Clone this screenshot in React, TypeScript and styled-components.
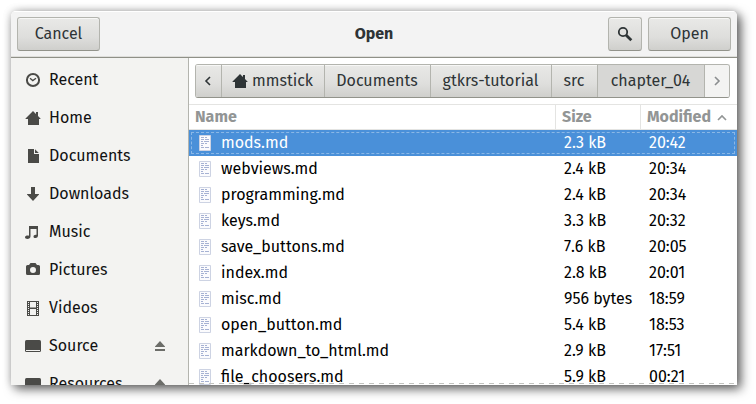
import React from "react";
import styled, { createGlobalStyle, css } from "styled-components";

const GlobalStyle = createGlobalStyle`
  *, *::before, *::after { box-sizing: border-box; }
  body {
    margin: 0;
    background: #fff;
    color: #000;
    font: 16px/20px "Fira Sans", "Noto Sans", "Open Sans", sans-serif;
  }
  button { font: inherit; color: inherit; margin: 0; }
`;

const Desktop = styled.main`
  display: flex;
  height: 100vh;
  padding: 11px 19px 19px 11px;
`;

const Dialog = styled.section`
  flex: 1;
  min-width: 0;
  display: flex;
  flex-direction: column;
  overflow: hidden;
  background: #fff;
  border-radius: 5px 5px 0 0;
  box-shadow: 4px 4px 11px rgba(0, 0, 0, 0.6), 0 0 8px rgba(0, 0, 0, 0.2);
`;

const HeaderBar = styled.header`
  display: grid;
  grid-template-columns: 1fr auto 1fr;
  align-items: center;
  flex: none;
  padding: 6px;
  background: #f3f3f3;
  border-bottom: 1px solid #8f9087;
  box-shadow: inset 0 1px #fff, inset 0 -1px #dededb;
`;

const Title = styled.h1`
  margin: 0;
  font-size: 16px;
  line-height: 20px;
  font-weight: 700;
  color: #2e3436;
`;

const HeaderEnd = styled.div`
  display: flex;
  justify-content: flex-end;
  gap: 6px;
`;

const raised = css`
  background: linear-gradient(#e9e9e7, #dededc 60%, #cfcfcc);
  box-shadow: inset 0 1px #f7f7f6;
`;

const PushButton = styled.button<{ $icon?: boolean }>`
  ${raised}
  display: flex;
  align-items: center;
  justify-content: center;
  width: ${(p) => (p.$icon ? 34 : 83)}px;
  height: 34px;
  padding: 0;
  border: 1px solid #b3b4ae;
  border-bottom-color: #92938b;
  border-radius: 3px;
  color: #2e3436;
`;

const Body = styled.div`
  flex: 1;
  min-height: 0;
  display: grid;
  grid-template-columns: 178px minmax(0, 1fr);
`;

const Sidebar = styled.nav`
  overflow: hidden;
  padding-top: 3px;
  background: #f3f3f1;
  border-right: 1px solid #b3b4ae;
`;

const PlaceList = styled.ul`
  margin: 0;
  padding: 0;
  list-style: none;
`;

const PlaceItem = styled.li`
  display: flex;
  align-items: center;
  height: 38px;
  padding: 0 20px 0 14px;
`;

const PlaceLink = styled.a`
  flex: 1;
  display: flex;
  align-items: center;
  gap: 8px;
  color: #111;
  text-decoration: none;
`;

const EjectButton = styled.button`
  display: flex;
  padding: 0;
  border: 0;
  background: none;
  color: #6c6d69;
`;

const Glyph = styled.svg`
  flex: none;
  display: block;
  width: 16px;
  height: 16px;
  fill: currentColor;
`;

const PlaceGlyph = styled(Glyph)`
  color: #4a4a47;
`;

const Files = styled.div`
  position: relative;
  overflow: hidden;

  &::after {
    content: "";
    position: absolute;
    left: 0;
    right: 0;
    bottom: 1px;
    height: 1px;
    background: repeating-linear-gradient(90deg, #c3c4c0 0 5px, transparent 5px 10px);
  }
`;

const PathBar = styled.div`
  display: flex;
  height: 34px;
  margin: 6px 7px 6px 6px;
  border: 1px solid #b3b4ae;
  border-bottom-color: #92938b;
  border-radius: 3px;
  overflow: hidden;
`;

const PathButton = styled.button<{ $basis: number; $current?: boolean }>`
  ${raised}
  flex: 1 1 ${(p) => p.$basis}px;
  min-width: 0;
  display: flex;
  align-items: center;
  justify-content: center;
  gap: 4px;
  padding: 0 1px 0 0;
  border: 0;
  border-right: 1px solid #b3b4ae;
  color: #2e3436;
  white-space: nowrap;
  ${(p) => p.$current && css`
    background: #d7d7d5;
    box-shadow: none;
  `}
  &:last-child { border-right: 0; }
  &:disabled {
    background: #f3f3f2;
    box-shadow: none;
    color: #8b8e8f;
  }
`;

const FileTable = styled.table`
  width: 100%;
  table-layout: fixed;
  border-spacing: 0;
`;

const Column = styled.th<{ $width?: number }>`
  width: ${(p) => (p.$width ? `${p.$width}px` : "auto")};
  height: 26px;
  padding: 0 0 0 6px;
  border-top: 1px solid #e4e4e2;
  border-bottom: 1px solid #e4e4e2;
  text-align: left;
  & + & { border-left: 1px solid #e4e4e2; }
`;

const SortButton = styled.button`
  display: flex;
  align-items: center;
  gap: 3px;
  padding: 0;
  border: 0;
  background: none;
  color: #929595;
  font-weight: 700;
`;

const FileRow = styled.tr<{ $selected?: boolean }>`
  height: 26px;
  ${(p) => p.$selected && css`
    background: #4a90d9;
    color: #fff;
    outline: 1px dashed #8ab7e6;
    outline-offset: -3px;
  `}
`;

const Cell = styled.td`
  padding: 0 0 0 9px;
  white-space: nowrap;
`;

const FileName = styled.div`
  display: flex;
  align-items: center;
  gap: 10px;
  padding-left: 1px;
`;

const PageGlyph = styled.svg`
  display: block;
  width: 12px;
  height: 16px;
`;

type PlaceIcon = "recent" | "home" | "documents" | "downloads" | "music" | "pictures" | "videos" | "drive";

const HOME = "M8 1 0.5 8.5V9H3v6h11V9h1.5V8.5L13 6V2h-2v2Z";

const placeShapes: Record<PlaceIcon, React.ReactNode> = {
  recent: (
    <g fill="none" stroke="currentColor">
      <circle cx="8" cy="8" r="6.1" strokeWidth="2" />
      <path d="M5 6.2 7.8 8.6 11 6.2" strokeWidth="1.3" />
    </g>
  ),
  home: <path d={HOME} />,
  documents: (
    <>
      <path d="M3 1h6v5h5v9H3z" />
      <path d="M10 1.2 13.8 5H10z" />
    </>
  ),
  downloads: <path d="M6 1h4v7h4v.6L8 15 2 8.6V8h4z" />,
  music: (
    <path d="M4 2h9v9.5C13 13.2 11.8 14 10.5 14S8.500 13.3 8.500 12.4C8.500 11.3 9.8 10.500 11.5 10.8V5H5.500v7.3C5.500 14 4 15 2.500 15S0 14.3 0 13.3C0 12 1.8 11.3 4 11.7z" />
  ),
  pictures: (
    <path
      fillRule="evenodd"
      d="M5.500 1h5l1.500 2h1.500Q15 3 15 4.500v7Q15 13 13.500 13h-11Q1 13 1 11.500v-7Q1 3 2.500 3H4zM8 5a3 3 0 1 0 0 6 3 3 0 0 0 0-6z"
    />
  ),
  videos: (
    <path
      fillRule="evenodd"
      d="M2 1h12v15H2zM5 2v5.500h6V2zM5 9v6h6V9zM3 2v1h1V2zM3 4v1h1V4zM3 6v1h1V6zM3 8v1h1V8zM3 10v1h1v-1zM3 12v1h1v-1zM3 14v1h1v-1zM12 2v1h1V2zM12 4v1h1V4zM12 6v1h1V6zM12 8v1h1V8zM12 10v1h1v-1zM12 12v1h1v-1zM12 14v1h1v-1z"
    />
  ),
  drive: (
    <>
      <path d="M1.500 2h13Q16 2 16 3.500V12.500Q16 14 14.500 14h-13Q0 14 0 12.500V3.500Q0 2 1.500 2z" />
      <path d="M1 12h14v1H1z" fill="#f3f3f1" />
    </>
  ),
};

interface Place {
  label: string;
  icon: PlaceIcon;
  removable?: boolean;
}

const places: Place[] = [
  { label: "Recent", icon: "recent" },
  { label: "Home", icon: "home" },
  { label: "Documents", icon: "documents" },
  { label: "Downloads", icon: "downloads" },
  { label: "Music", icon: "music" },
  { label: "Pictures", icon: "pictures" },
  { label: "Videos", icon: "videos" },
  { label: "Source", icon: "drive", removable: true },
  { label: "Resources", icon: "drive", removable: true },
];

const files = [
  ["mods.md", "2.3 kB", "20:42"],
  ["webviews.md", "2.4 kB", "20:34"],
  ["programming.md", "2.4 kB", "20:34"],
  ["keys.md", "3.3 kB", "20:32"],
  ["save_buttons.md", "7.6 kB", "20:05"],
  ["index.md", "2.8 kB", "20:01"],
  ["misc.md", "956 bytes", "18:59"],
  ["open_button.md", "5.4 kB", "18:53"],
  ["markdown_to_html.md", "2.9 kB", "17:51"],
  ["file_choosers.md", "5.9 kB", "00:21"],
];

const Chevron = ({ d }: { d: string }) => (
  <Glyph viewBox="0 0 16 16" aria-hidden="true">
    <path d={d} fill="none" stroke="currentColor" strokeWidth="1.6" />
  </Glyph>
);

const TextFileIcon = () => (
  <PageGlyph viewBox="0 0 12 16" aria-hidden="true">
    <path d="M.5.5h11v15H.5z" fill="#fbfbfd" stroke="#cdd3e3" />
    <path
      d="M2 2.500h3M6 2.500h2M2 4.500h3M6 4.500h4M2 6.500h2M5 6.500h5M2 8.500h3M6 8.500h2M2 10.500h2M2 12.500h3M6 12.500h4"
      stroke="#a6b2d3"
    />
  </PageGlyph>
);

export default function App() {
  return (
    <Desktop>
      <GlobalStyle />
      <Dialog role="dialog" aria-labelledby="dialog-title">
        <HeaderBar>
          <PushButton type="button">Cancel</PushButton>
          <Title id="dialog-title">Open</Title>
          <HeaderEnd>
            <PushButton type="button" $icon aria-label="Search">
              <Glyph viewBox="0 0 16 16" aria-hidden="true">
                <g fill="none" stroke="currentColor">
                  <circle cx="6" cy="6" r="4.2" strokeWidth="1.8" />
                  <path d="M9 9l5.3 5.3" strokeWidth="2.8" />
                </g>
              </Glyph>
            </PushButton>
            <PushButton type="button">Open</PushButton>
          </HeaderEnd>
        </HeaderBar>
        <Body>
          <Sidebar aria-label="Places">
            <PlaceList>
              {places.map((place) => (
                <PlaceItem key={place.label}>
                  <PlaceLink href={`#${place.label.toLowerCase()}`}>
                    <PlaceGlyph viewBox="0 0 16 16" aria-hidden="true">
                      {placeShapes[place.icon]}
                    </PlaceGlyph>
                    {place.label}
                  </PlaceLink>
                  {place.removable && (
                    <EjectButton type="button" aria-label={`Eject ${place.label}`}>
                      <Glyph viewBox="0 0 16 16" aria-hidden="true">
                        <path d="M8 3l5 5.500V9H3v-.5zM3 11h10v2H3z" />
                      </Glyph>
                    </EjectButton>
                  )}
                </PlaceItem>
              ))}
            </PlaceList>
          </Sidebar>
          <Files>
            <PathBar role="group" aria-label="Folder path">
              <PathButton type="button" $basis={26} aria-label="Scroll path left">
                <Chevron d="M10 4 6 8l4 4" />
              </PathButton>
              <PathButton type="button" $basis={103}>
                <Glyph viewBox="0 0 16 16" aria-hidden="true">
                  <path d={HOME} />
                </Glyph>
                mmstick
              </PathButton>
              <PathButton type="button" $basis={106}>Documents</PathButton>
              <PathButton type="button" $basis={121}>gtkrs-tutorial</PathButton>
              <PathButton type="button" $basis={46}>src</PathButton>
              <PathButton type="button" $basis={107} $current aria-current="page">chapter_04</PathButton>
              <PathButton type="button" $basis={24} disabled aria-label="Scroll path right">
                <Chevron d="M6 4l4 4-4 4" />
              </PathButton>
            </PathBar>
            <FileTable>
              <thead>
                <tr>
                  <Column scope="col">
                    <SortButton type="button">Name</SortButton>
                  </Column>
                  <Column scope="col" $width={85}>
                    <SortButton type="button">Size</SortButton>
                  </Column>
                  <Column scope="col" $width={97} aria-sort="descending">
                    <SortButton type="button">
                      Modified
                      <Chevron d="M4 11l4-4 4 4" />
                    </SortButton>
                  </Column>
                </tr>
              </thead>
              <tbody>
                {files.map(([name, size, modified], index) => (
                  <FileRow key={name} $selected={index === 0} aria-selected={index === 0}>
                    <Cell>
                      <FileName>
                        <TextFileIcon />
                        {name}
                      </FileName>
                    </Cell>
                    <Cell>{size}</Cell>
                    <Cell>{modified}</Cell>
                  </FileRow>
                ))}
              </tbody>
            </FileTable>
          </Files>
        </Body>
      </Dialog>
    </Desktop>
  );
}
